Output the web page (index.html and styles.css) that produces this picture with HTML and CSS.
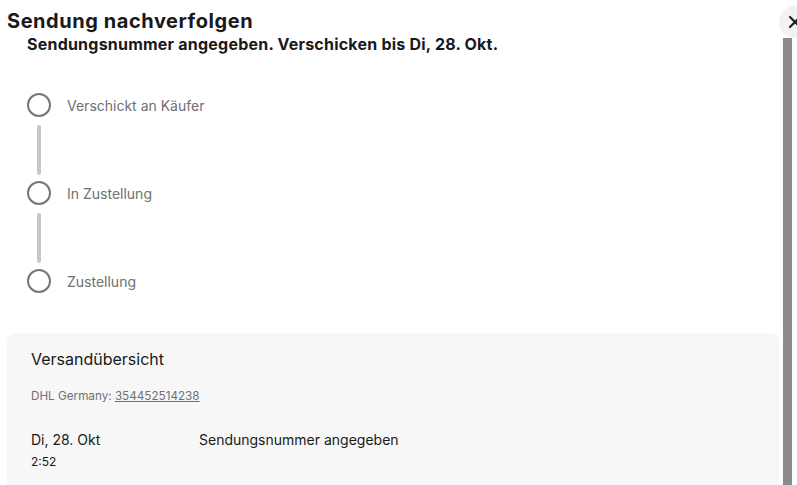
FILE: index.html
```html
<!DOCTYPE html>
<html lang="de">
<head>
    <meta charset="UTF-8">
    <title>Sendung nachverfolgen</title>
    <link rel="stylesheet" href="styles.css">
</head>
<body>
    <div class="dialog">
        <button class="close-btn" aria-label="Schließen">
            <svg width="14" height="14" viewBox="0 0 14 14"><path d="M2 2 L12 12 M12 2 L2 12" stroke="#191919" stroke-width="2" stroke-linecap="round"/></svg>
        </button>
        <div class="scrollbar"></div>

        <h1 class="title">Sendung nachverfolgen</h1>
        <div class="content">
            <h2 class="status">Sendungsnummer angegeben. Verschicken bis Di, 28. Okt.</h2>

            <!-- Progress steps -->
            <ul class="steps">
                <li class="step">
                    <span class="dot"></span>
                    <span class="step-label">Verschickt an Käufer</span>
                </li>
                <li class="connector"></li>
                <li class="step">
                    <span class="dot"></span>
                    <span class="step-label">In Zustellung</span>
                </li>
                <li class="connector"></li>
                <li class="step">
                    <span class="dot"></span>
                    <span class="step-label">Zustellung</span>
                </li>
            </ul>
        </div>

        <!-- Shipping overview -->
        <div class="overview">
            <h3>Versandübersicht</h3>
            <p class="carrier">DHL Germany: <a href="#">354452514238</a></p>
            <div class="event">
                <div class="event-date">
                    <div>Di, 28. Okt</div>
                    <div class="event-time">2:52</div>
                </div>
                <div class="event-text">Sendungsnummer angegeben</div>
            </div>
        </div>
    </div>
</body>
</html>
```
FILE: styles.css
```css
body {
    margin: 0;
    font-family: Inter, "Liberation Sans", Arial, sans-serif;
    color: #191919;
    background: #fff;
    overflow: hidden;
}

.dialog {
    position: relative;
    height: 485px;
    padding: 0 18px 0 7px;
}

.close-btn {
    position: absolute;
    top: 6px;
    left: 779px;
    width: 32px;
    height: 32px;
    border: none;
    border-radius: 50%;
    background: #f2f2f2;
    padding: 0;
    display: flex;
    align-items: center;
    justify-content: center;
}

.scrollbar {
    position: absolute;
    top: 38px;
    left: 783px;
    width: 9px;
    bottom: 0;
    background: #8a8a8a;
}

.title {
    margin: 0;
    padding-top: 8px;
    font-size: 20px;
    font-weight: 700;
    line-height: 26px;
    letter-spacing: 0.55px;
}

.content {
    padding-left: 20px;
}

.status {
    margin: 0;
    font-size: 16px;
    font-weight: 700;
    line-height: 20px;
    letter-spacing: 0.22px;
}

.steps {
    list-style: none;
    margin: 39px 0 0;
    padding: 0;
}

.step {
    display: flex;
    align-items: center;
    height: 24px;
}

.dot {
    width: 20px;
    height: 20px;
    border: 2px solid #767676;
    border-radius: 50%;
    flex: none;
}

.step-label {
    margin-left: 16px;
    font-size: 14px;
    color: #707070;
}

.connector {
    width: 4px;
    height: 50px;
    margin: 8px 0 6px 10px;
    background: #c7c7c7;
    border-radius: 2px;
}

.overview {
    margin-top: 40px;
    background: #f7f7f7;
    border-radius: 8px;
    padding: 16px 24px 20px;
    height: 130px;
}

.overview h3 {
    margin: 0;
    font-size: 16px;
    font-weight: 400;
    line-height: 20px;
}

.carrier {
    margin: 20px 0 0;
    font-size: 11.7px;
    color: #707070;
}

.carrier a {
    color: #707070;
}

.event {
    display: flex;
    margin-top: 28px;
    font-size: 14px;
}

.event-date {
    width: 168px;
}

.event-time {
    font-size: 12px;
    margin-top: 6px;
}
```
